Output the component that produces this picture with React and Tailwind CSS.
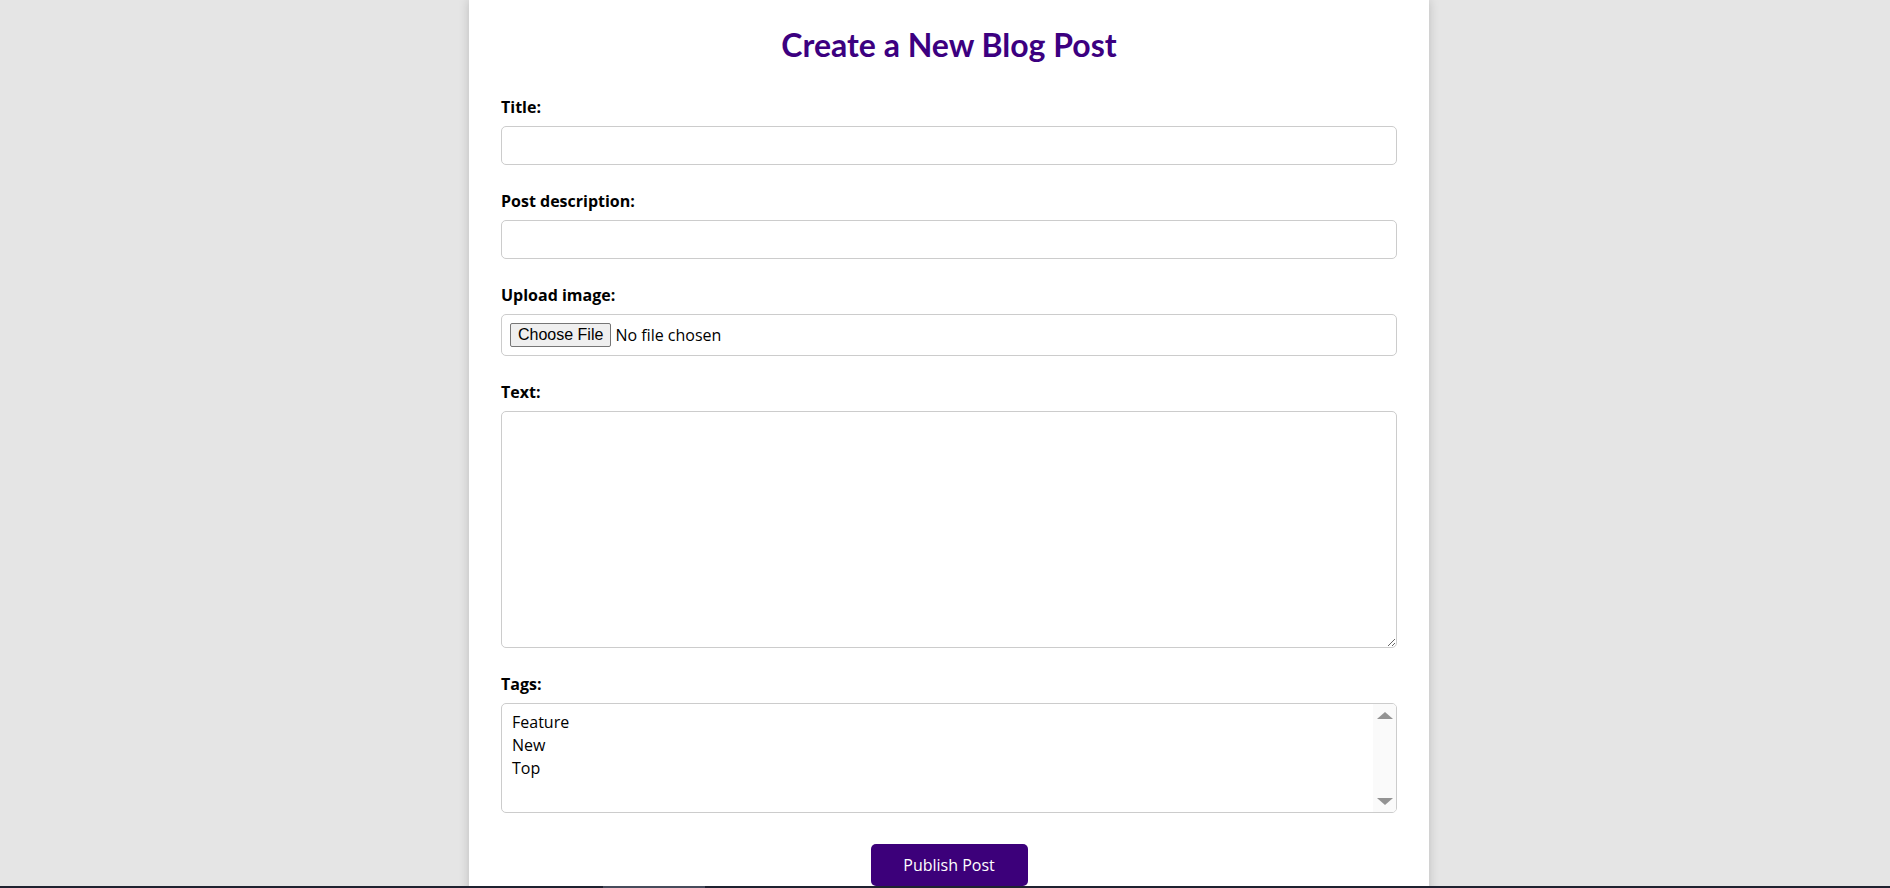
import React from "react";

function Label({ children }) {
  return (
    <label className="block text-[16px] leading-[24px] font-bold text-black mb-[7px]">
      {children}
    </label>
  );
}

export default function App() {
  return (
    <div className="h-[888px] w-full overflow-hidden bg-[#e5e5e5] flex flex-col font-['Open_Sans',sans-serif]">
      <div className="h-[886px] overflow-hidden pl-[8px]">
        <div className="mx-auto w-[960px] h-[940px] bg-white shadow-[0_0_10px_rgba(0,0,0,0.18)] px-[32px] pt-[25px]">
          <h1 className="text-center text-[32px] leading-[40px] font-bold text-[#3c0080] font-['Lato',sans-serif] mb-[30px]">
            Create a New Blog Post
          </h1>

          <div className="mb-[24px]">
            <Label>Title:</Label>
            <input
              type="text"
              className="block w-full h-[39px] border border-[#cccccc] rounded-[5px] px-[10px] text-[16px] outline-none"
            />
          </div>

          <div className="mb-[24px]">
            <Label>Post description:</Label>
            <input
              type="text"
              className="block w-full h-[39px] border border-[#cccccc] rounded-[5px] px-[10px] text-[16px] outline-none"
            />
          </div>

          <div className="mb-[24px]">
            <Label>Upload image:</Label>
            <div className="flex items-center w-full h-[42px] border border-[#cccccc] rounded-[5px] pl-[8px] text-[16px]">
              <span className="inline-flex items-center h-[24px] px-[7px] border border-[#767676] rounded-[2px] bg-[#efefef] text-black font-['Liberation_Sans',Arial,sans-serif] text-[16px] leading-[18px] mr-[4px]">
                Choose File
              </span>
              <span className="text-black">No file chosen</span>
            </div>
          </div>

          <div className="mb-[24px]">
            <Label>Text:</Label>
            <textarea className="block w-full h-[237px] border border-[#cccccc] rounded-[5px] px-[10px] py-[8px] text-[16px] outline-none resize-y" />
          </div>

          <div className="mb-[31px]">
            <Label>Tags:</Label>
            <div className="flex w-full h-[110px] border border-[#cccccc] rounded-[5px] overflow-hidden">
              <div className="flex-1 pl-[10px] pt-[7px] text-[16px] leading-[23px] text-black">
                <div>Feature</div>
                <div>New</div>
                <div>Top</div>
              </div>
              <div className="w-[23px] bg-[#fafafa] flex flex-col items-center justify-between pt-[8px] pb-[7px]">
                <div className="w-0 h-0 border-l-[8px] border-r-[8px] border-b-[7px] border-l-transparent border-r-transparent border-b-[#939393]" />
                <div className="w-0 h-0 border-l-[8px] border-r-[8px] border-t-[7px] border-l-transparent border-r-transparent border-t-[#939393]" />
              </div>
            </div>
          </div>

          <div className="flex justify-center">
            <button className="w-[157px] h-[42px] rounded-[5px] bg-[#3c007a] text-white text-[16px]">
              Publish Post
            </button>
          </div>
        </div>
      </div>
      <div className="h-[2px] w-full bg-[#1f2230] flex">
        <div className="w-[603px]" />
        <div className="w-[102px] bg-[#474c5c]" />
      </div>
    </div>
  );
}
